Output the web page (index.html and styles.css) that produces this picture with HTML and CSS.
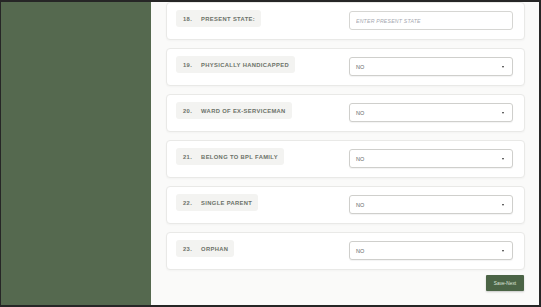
FILE: index.html
```html
<!DOCTYPE html>
<html>
<head>
<meta charset="utf-8">
<link rel="stylesheet" href="styles.css">
</head>
<body>
<div class="frame">
  <aside class="sidebar"></aside>
  <main class="main">
    <div class="list">
      <div class="card">
        <div class="pill"><span class="num">18.</span><span>PRESENT STATE:</span></div>
        <input class="field" type="text" placeholder="ENTER PRESENT STATE">
      </div>
      <div class="card">
        <div class="pill"><span class="num">19.</span><span>PHYSICALLY HANDICAPPED</span></div>
        <div class="select"><span>NO</span><span class="caret"></span></div>
      </div>
      <div class="card">
        <div class="pill"><span class="num">20.</span><span>WARD OF EX-SERVICEMAN</span></div>
        <div class="select"><span>NO</span><span class="caret"></span></div>
      </div>
      <div class="card">
        <div class="pill"><span class="num">21.</span><span>BELONG TO BPL FAMILY</span></div>
        <div class="select"><span>NO</span><span class="caret"></span></div>
      </div>
      <div class="card">
        <div class="pill"><span class="num">22.</span><span>SINGLE PARENT</span></div>
        <div class="select"><span>NO</span><span class="caret"></span></div>
      </div>
      <div class="card">
        <div class="pill"><span class="num">23.</span><span>ORPHAN</span></div>
        <div class="select"><span>NO</span><span class="caret"></span></div>
      </div>
    </div>
    <div class="actions">
      <button class="btn" type="button">Save-Next</button>
    </div>
  </main>
</div>
</body>
</html>
```

FILE: styles.css
```css
* { box-sizing: border-box; }
html, body { margin: 0; padding: 0; }
body {
  width: 541px;
  height: 307px;
  overflow: hidden;
  font-family: "Liberation Sans", Arial, sans-serif;
  background: #fff;
}
.frame {
  display: flex;
  width: 541px;
  height: 307px;
  border: 2px solid #262626;
  border-left-width: 1px;
  overflow: hidden;
}
.sidebar {
  width: 150px;
  flex: 0 0 150px;
  background: #55694f;
}
.main {
  flex: 1;
  background: #fafaf9;
  padding: 0 14px 0 15px;
  display: flex;
  flex-direction: column;
}
.list {
  display: flex;
  flex-direction: column;
  gap: 8px;
}
.card {
  height: 38px;
  background: #fff;
  border: 1px solid #e9e9e7;
  border-radius: 4px;
  padding: 7px 11px 0 9px;
  display: grid;
  grid-template-columns: 173px 1fr;
  align-items: start;
  box-shadow: 0 1px 2px rgba(0,0,0,0.03);
}
.pill {
  justify-self: start;
  display: inline-flex;
  align-items: center;
  gap: 9px;
  height: 17px;
  padding: 0 6px 0 7px;
  background: #f3f3f1;
  border-radius: 3px;
  font-size: 5.8px;
  font-weight: bold;
  letter-spacing: 0.35px;
  color: #6b7168;
  white-space: nowrap;
}
.field {
  display: block;
  width: 100%;
  height: 19px;
  margin: 1px 0 0;
  border: 1px solid #d6d6d3;
  border-radius: 3px;
  background: #fff;
  padding: 0 6px;
  font-family: "Liberation Sans", Arial, sans-serif;
  font-size: 5.2px;
  color: #555;
  outline: none;
}
.field::placeholder {
  font-style: italic;
  color: #a6a8b0;
  letter-spacing: 0.2px;
}
.select {
  display: flex;
  align-items: center;
  justify-content: space-between;
  height: 19px;
  margin-top: 1px;
  border: 1px solid #cfcfcc;
  border-radius: 3px;
  background: #fff;
  padding: 0 8px 0 6px;
  font-size: 5.5px;
  color: #666;
  box-shadow: 0 1px 1px rgba(0,0,0,0.05);
}
.caret {
  width: 0;
  height: 0;
  border-left: 1.5px solid transparent;
  border-right: 1.5px solid transparent;
  border-top: 2px solid #333;
}
.actions {
  display: flex;
  justify-content: flex-end;
  margin-top: 5px;
  padding-right: 1px;
}
.btn {
  width: 38px;
  height: 16px;
  padding: 0;
  border: none;
  border-radius: 1px;
  background: #4b6446;
  color: #dfe6dc;
  font-family: "Liberation Sans", Arial, sans-serif;
  font-size: 4.8px;
  box-shadow: 0 1px 2px rgba(0,0,0,0.2);
}
```
